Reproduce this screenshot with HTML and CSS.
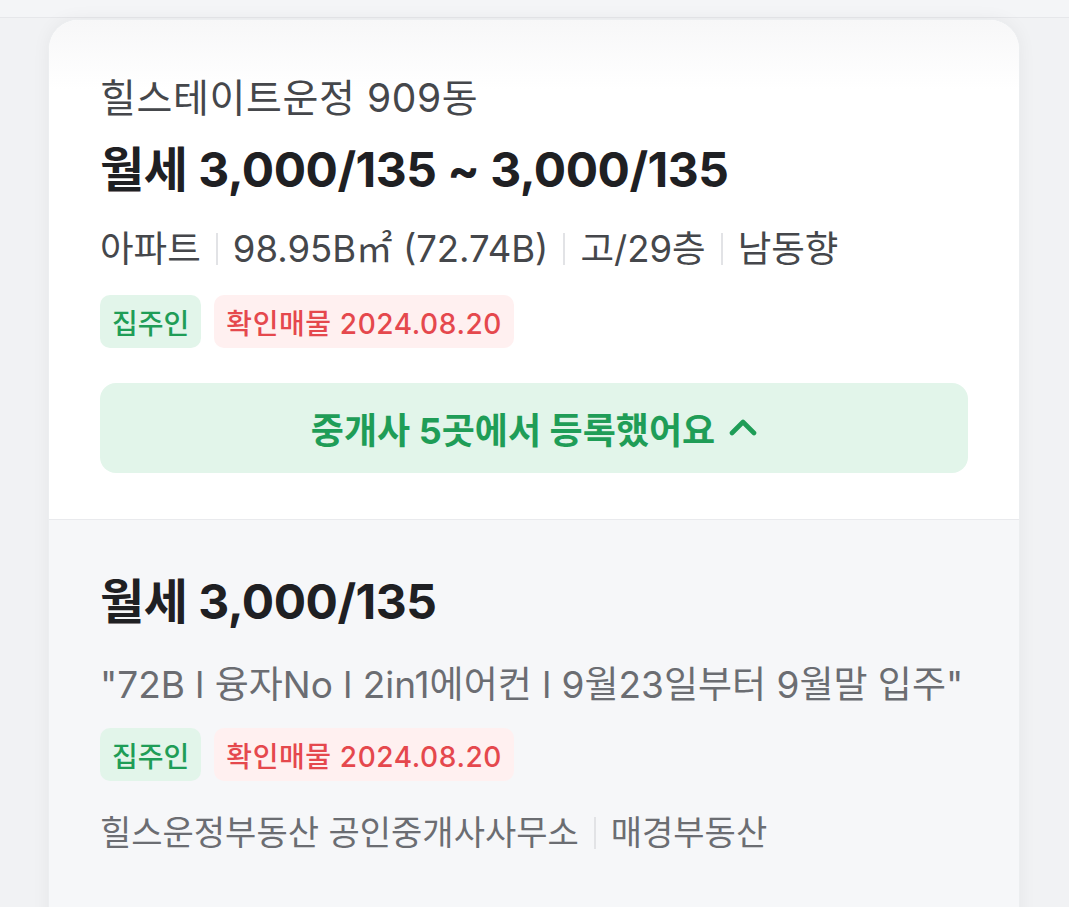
FILE: index.html
```html
<!DOCTYPE html>
<html lang="ko">
<head>
  <meta charset="UTF-8" />
  <title>힐스테이트운정 909동</title>
  <meta name="viewport" content="width=device-width,initial-scale=1" />
  <link rel="stylesheet" href="styles.css">
</head>
<body>
  <div class="topbar"></div>

  <div class="card">
    <div class="complex">
      <div class="complex-name">힐스테이트운정 909동</div>
      <div class="price price-range">월세 3,000/135 ~ 3,000/135</div>
      <div class="meta">
        <span>아파트</span>
        <span class="sep"></span>
        <span>98.95B㎡ (72.74B)</span>
        <span class="sep"></span>
        <span>고/29층</span>
        <span class="sep"></span>
        <span>남동향</span>
      </div>
      <div class="tags">
        <span class="tag tag-owner">집주인</span>
        <span class="tag tag-verified">확인매물 2024.08.20</span>
      </div>
      <button class="agents-toggle" type="button">
        중개사 5곳에서 등록했어요
        <svg class="chevron" width="28" height="18" viewBox="0 0 28 18" aria-hidden="true">
          <path d="M3 15 L14 4 L25 15" fill="none" stroke="currentColor" stroke-width="4.6" stroke-linecap="round" stroke-linejoin="round"/>
        </svg>
      </button>
    </div>

    <div class="listing">
      <div class="price">월세 3,000/135</div>
      <div class="memo">"72B l 융자No l 2in1에어컨 l 9월23일부터 9월말 입주"</div>
      <div class="tags">
        <span class="tag tag-owner">집주인</span>
        <span class="tag tag-verified">확인매물 2024.08.20</span>
      </div>
      <div class="agent">
        <span>힐스운정부동산 공인중개사사무소</span>
        <span class="sep"></span>
        <span>매경부동산</span>
      </div>
    </div>
  </div>
</body>
</html>
```

FILE: styles.css
```css
:root {
  --page-bg: #f1f2f4;
  --card-bg: #ffffff;
  --listing-bg: #f6f7f9;
  --text-strong: #1f2023;
  --text-main: #45474b;
  --text-sub: #6b6d72;
  --green: #1f9d57;
  --green-bg: #e2f5ea;
  --red: #e5484d;
  --red-bg: #fff0f0;
  --line: #e9eaed;
}
body {
  margin: 0;
  background: var(--page-bg);
  font-family: Inter, "Noto Sans CJK KR", sans-serif;
  color: var(--text-main);
  overflow: hidden;
}
.topbar {
  height: 17px;
  background: #f4f5f7;
  border-bottom: 1px solid #e6e7ea;
}
.card {
  margin: 1px 49px 0 48px;
  border-radius: 30px 30px 0 0;
  background: var(--card-bg);
  box-shadow: 0 0 18px rgba(0, 0, 0, 0.05);
  overflow: hidden;
  border: 1px solid #eceef0;
  border-bottom: none;
}
.complex {
  padding: 55px 51px 46px 51px;
  background: linear-gradient(#f7f7f8 0, #ffffff 70px);
}
.complex-name {
  font-size: 39px;
  line-height: 46px;
  letter-spacing: 0.6px;
  color: var(--text-main);
}
.price {
  font-size: 48px;
  line-height: 60px;
  font-weight: 700;
  color: var(--text-strong);
  letter-spacing: -0.5px;
}
.price-range {
  margin-top: 19px;
}
.meta, .memo, .agent {
  line-height: 46px;
}
.meta {
  margin-top: 26px;
  display: flex;
  align-items: center;
  font-size: 36.5px;
  color: var(--text-main);
}
.sep {
  display: inline-block;
  width: 2px;
  height: 32px;
  background: #e2e3e6;
  margin: 0 15px;
}
.tags {
  display: flex;
  gap: 13px;
  margin-top: 23px;
}
.tag {
  display: inline-flex;
  align-items: center;
  height: 53px;
  padding: 0 12px;
  border-radius: 10px;
  font-size: 28px;
  font-weight: 500;
}
.tag-owner {
  background: var(--green-bg);
  color: var(--green);
}
.tag-verified {
  background: var(--red-bg);
  color: var(--red);
  letter-spacing: 0.6px;
}
.agents-toggle {
  margin-top: 35px;
  width: 100%;
  height: 90px;
  border: none;
  border-radius: 16px;
  background: var(--green-bg);
  color: var(--green);
  font-family: inherit;
  font-size: 36px;
  font-weight: 700;
  display: flex;
  align-items: center;
  justify-content: center;
  gap: 14px;
  cursor: pointer;
}
.chevron {
  margin-top: -2px;
}
.listing {
  background: var(--listing-bg);
  border-top: 1px solid var(--line);
  padding: 52px 51px 60px 51px;
  min-height: 400px;
}
.memo {
  margin-top: 30px;
  font-size: 37px;
  color: var(--text-sub);
}
.listing .tags {
  margin-top: 20px;
}
.agent {
  margin-top: 29px;
  display: flex;
  align-items: center;
  font-size: 34px;
  color: var(--text-sub);
}
```
